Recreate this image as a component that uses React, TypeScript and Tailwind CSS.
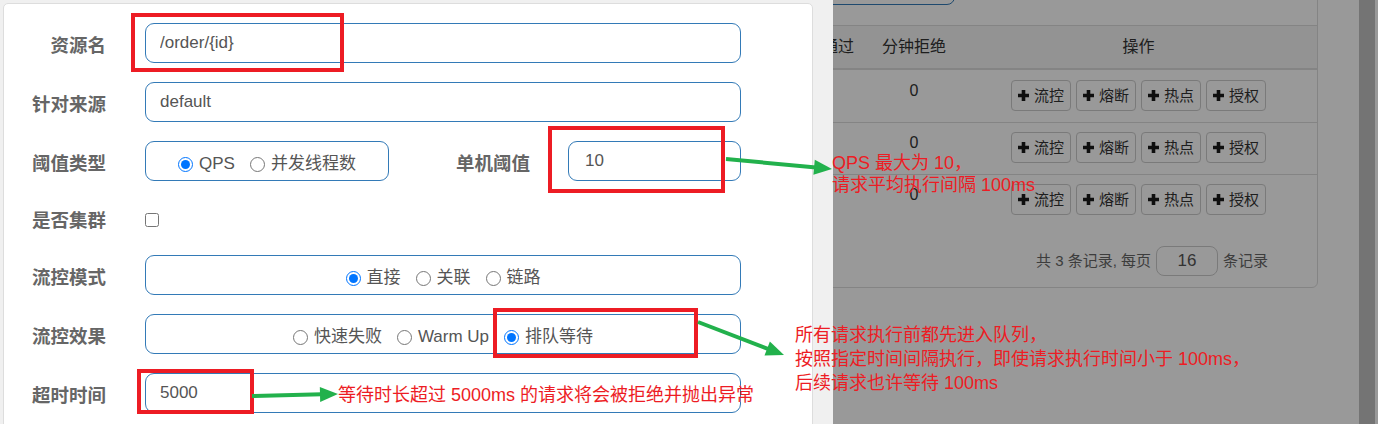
import type { ReactNode } from "react";

const font = "font-['Liberation_Sans','Noto_Sans_CJK_SC',sans-serif]";

const RED = "#ed1c24";
const GREEN = "#22b14c";

function Plus() {
  return (
    <svg viewBox="0 0 11 11" className="h-[11px] w-[11px] text-[#1a1a1a]" fill="currentColor">
      <path d="M3.7 0h3.6v3.7H11v3.6H7.3V11H3.7V7.3H0V3.7h3.7z" />
    </svg>
  );
}

function ActionButton({ label }: { label: string }) {
  return (
    <button
      type="button"
      className="flex h-[31px] w-[60px] items-center justify-center gap-[5px] rounded-[4px] border border-[#ccc] bg-white text-[15px] leading-none text-[#333]"
    >
      <Plus />
      <span>{label}</span>
    </button>
  );
}

function TableRow({ first }: { first?: boolean }) {
  return (
    <div
      className={
        first
          ? "grid h-[52px] grid-cols-[1fr_92px_92px_357px] pt-[10px] text-center"
          : "grid h-[52px] grid-cols-[1fr_92px_92px_357px] border-t border-[#ddd] pt-[9px] text-center"
      }
    >
      <div />
      <div />
      <div className="text-[16px] leading-[22px] text-[#333]">0</div>
      <div className="flex justify-center gap-[5px]">
        {["流控", "熔断", "热点", "授权"].map((b) => (
          <ActionButton key={b} label={b} />
        ))}
      </div>
    </div>
  );
}

function BackgroundPage() {
  return (
    <div className="flex h-full">
      <div className="flex-1 pl-[320px] pr-[41px]">
        <div className="mt-[-45px] rounded-[6px] border border-[#ddd] bg-white">
          {/* Toolbar */}
          <div className="pb-[20px] pl-[379px] pt-[15px]">
            <div className="h-[34px] w-[255px] rounded-[8px] border border-[#337ab7]" />
          </div>

          {/* Table */}
          <div className="grid h-[45px] grid-cols-[1fr_92px_92px_357px] items-center border-b-2 border-t border-[#ddd] bg-[#f5f5f5] text-center text-[16px] text-[#333]">
            <div />
            <div>分钟通过</div>
            <div>分钟拒绝</div>
            <div>操作</div>
          </div>
          <TableRow first />
          <TableRow />
          <TableRow />

          {/* Pagination */}
          <div className="flex items-center justify-end gap-[5px] pb-[11px] pr-[49px] pt-[20px] text-[15px] text-[#666]">
            <span>共 3 条记录, 每页</span>
            <div className="flex h-[30px] w-[62px] items-center justify-center rounded-[8px] border border-[#ccc] text-[17px] text-[#555]">
              16
            </div>
            <span>条记录</span>
          </div>
        </div>
      </div>
      <div className="flex w-[19px]">
        <div className="w-[16px] bg-[#c1c1c1]" />
        <div className="flex-1 bg-white" />
      </div>
    </div>
  );
}

function FormRow({
  label,
  children,
  short,
}: {
  label: string;
  children: ReactNode;
  short?: boolean;
}) {
  return (
    <div className={short ? "flex h-[36px] items-center" : "flex h-[40px] items-center"}>
      <span className="mt-[6px] w-[102px] text-right text-[18.5px] font-bold leading-[26px] text-[#666]">
        {label}
      </span>
      <div className="ml-[39px] flex items-center">{children}</div>
    </div>
  );
}

function TextBox({ value, wide }: { value: string; wide?: boolean }) {
  return (
    <input
      readOnly
      defaultValue={value}
      className={
        wide
          ? "h-[40px] w-[596px] rounded-[9px] border border-[#337ab7] bg-white px-[14px] text-[17px] text-[#555] outline-none"
          : "h-[40px] w-[173px] rounded-[9px] border border-[#337ab7] bg-white px-[16px] text-[17px] text-[#555] outline-none"
      }
    />
  );
}

function RadioGroup({
  name,
  options,
  checked,
  wide,
}: {
  name: string;
  options: string[];
  checked: string;
  wide?: boolean;
}) {
  return (
    <div
      className={
        wide
          ? "flex h-[40px] w-[596px] items-center justify-center gap-[15px] rounded-[9px] border border-[#337ab7] pt-[6px]"
          : "flex h-[40px] w-[244px] items-center justify-center gap-[15px] rounded-[9px] border border-[#337ab7] pt-[6px]"
      }
    >
      {options.map((o) => (
        <label key={o} className="flex items-center gap-[6px] text-[17px] leading-[22px] text-[#555]">
          <input
            type="radio"
            name={name}
            defaultChecked={o === checked}
            className="m-0 h-[15px] w-[15px]"
          />
          <span>{o}</span>
        </label>
      ))}
    </div>
  );
}

function Dialog() {
  return (
    <div className="absolute bottom-0 left-0 top-0 w-[833px] bg-[#f0f0f0] pl-[3px] pt-[3px]">
      <div className="h-[460px] w-[810px] rounded-[5px] border border-[#ddd] bg-white">
        <div className="flex flex-col gap-[19px] pt-[19px]">
          <FormRow label="资源名">
            <TextBox value="/order/{id}" wide />
          </FormRow>
          <FormRow label="针对来源">
            <TextBox value="default" wide />
          </FormRow>
          <FormRow label="阈值类型">
            <RadioGroup name="grade" options={["QPS", "并发线程数"]} checked="QPS" />
            <span className="mt-[6px] w-[141px] text-right text-[18.5px] font-bold leading-[26px] text-[#666]">
              单机阈值
            </span>
            <div className="ml-[38px]">
              <TextBox value="10" />
            </div>
          </FormRow>
          <FormRow label="是否集群" short>
            <input type="checkbox" className="m-0 mt-[3px] h-[14px] w-[14px]" />
          </FormRow>
          <FormRow label="流控模式">
            <RadioGroup name="strategy" options={["直接", "关联", "链路"]} checked="直接" wide />
          </FormRow>
          <FormRow label="流控效果">
            <RadioGroup
              name="behavior"
              options={["快速失败", "Warm Up", "排队等待"]}
              checked="排队等待"
              wide
            />
          </FormRow>
          <FormRow label="超时时间">
            <TextBox value="5000" wide />
          </FormRow>
        </div>
      </div>
    </div>
  );
}

function Arrow({ x1, y1, x2, y2 }: { x1: number; y1: number; x2: number; y2: number }) {
  const len = Math.hypot(x2 - x1, y2 - y1);
  const ux = (x2 - x1) / len;
  const uy = (y2 - y1) / len;
  const bx = x2 - ux * 18;
  const by = y2 - uy * 18;
  const w = 7.5;
  const pts = `${x2},${y2} ${bx - uy * w},${by + ux * w} ${bx + uy * w},${by - ux * w}`;
  return (
    <g>
      <line x1={x1} y1={y1} x2={bx + ux * 2} y2={by + uy * 2} stroke={GREEN} strokeWidth={4} />
      <polygon points={pts} fill={GREEN} />
    </g>
  );
}

function Annotations() {
  return (
    <div className="pointer-events-none absolute inset-0">
      <svg width={1378} height={424} className="absolute left-0 top-0">
        <g fill="none" stroke={RED} strokeWidth={4}>
          <rect x={133} y={15} width={209} height={55} />
          <rect x={550} y={128} width={173} height={63} />
          <rect x={495} y={310} width={201} height={46} />
          <rect x={139} y={371} width={113} height={41} />
        </g>
        <Arrow x1={726} y1={159} x2={832} y2={169} />
        <Arrow x1={698} y1={322} x2={784} y2={355} />
        <Arrow x1={252} y1={396} x2={338} y2={394} />
      </svg>

      <div className="absolute left-[832px] top-[152px] text-[18px] leading-[22px] text-[#ed1c24]">
        <div>QPS 最大为 10，</div>
        <div>请求平均执行间隔 100ms</div>
      </div>

      <div className="absolute left-[795px] top-[323px] text-[18px] leading-[24px] text-[#ed1c24]">
        <div>所有请求执行前都先进入队列，</div>
        <div>按照指定时间间隔执行，即使请求执行时间小于 100ms，</div>
        <div>后续请求也许等待 100ms</div>
      </div>

      <div className="absolute left-[338px] top-[384px] text-[18px] leading-[22px] text-[#ed1c24]">
        等待时长超过 5000ms 的请求将会被拒绝并抛出异常
      </div>
    </div>
  );
}

export default function App() {
  return (
    <div className={`relative h-[424px] w-[1378px] overflow-hidden bg-white ${font}`}>
      <BackgroundPage />
      <div className="absolute inset-0 bg-black/40" />
      <Dialog />
      <Annotations />
    </div>
  );
}
